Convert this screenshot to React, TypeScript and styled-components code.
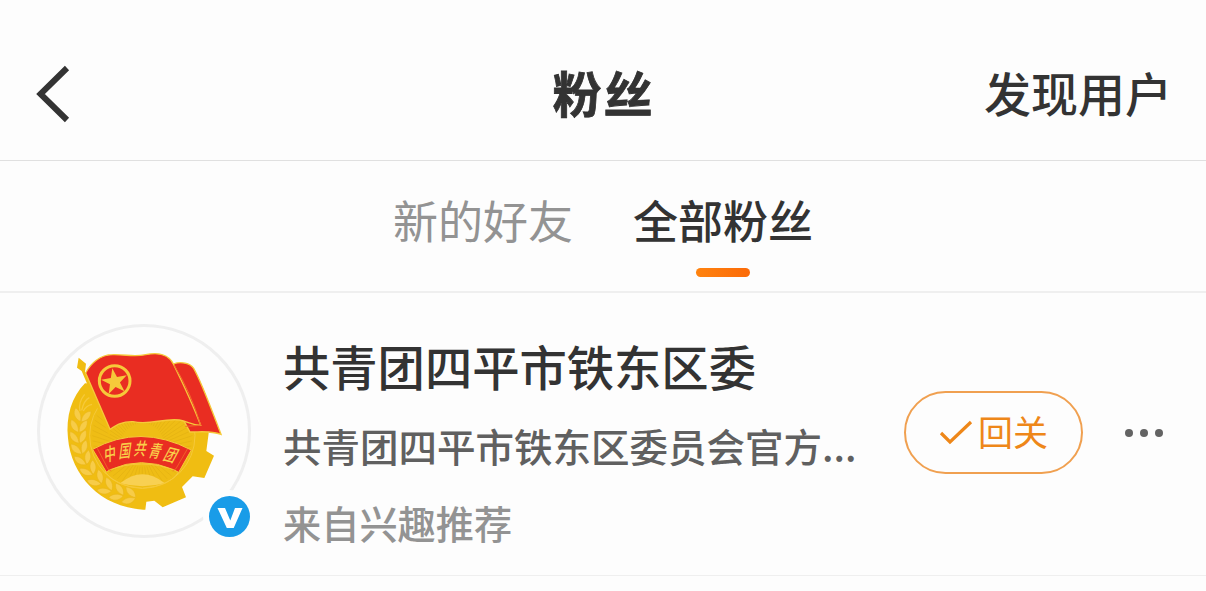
import { useState } from "react";
import styled, { createGlobalStyle } from "styled-components";

const TEXT_COLOR = "#333333";
const MUTED_COLOR = "#939393";
const ORANGE = "#ee8719";
const RED = "#e92d22";
const GOLD = "#f0bd12";
const LIGHT_GOLD = "#f6c93a";

const GlobalStyle = createGlobalStyle`
  * {
    box-sizing: border-box;
  }

  body {
    margin: 0;
    background: #fdfdfd;
    color: ${TEXT_COLOR};
    font-family: "Noto Sans CJK SC", sans-serif;
  }

  button {
    padding: 0;
    border: 0;
    background: none;
    color: inherit;
    font: inherit;
    cursor: pointer;
  }
`;

const Page = styled.div`
  width: 1206px;
  height: 591px;
  overflow: hidden;
`;

const Header = styled.header`
  height: 161px;
  padding: 28px 34px 0 35px;
  display: grid;
  grid-template-columns: 1fr auto 1fr;
  align-items: center;
  border-bottom: 1px solid #e0e0e0;
`;

const BackButton = styled.button`
  justify-self: start;
  display: flex;

  svg {
    width: 36px;
    height: 60px;
  }
`;

const Title = styled.h1`
  margin: 0 0 4px;
  font-size: 49px;
  line-height: 72px;
  font-weight: 700;
  letter-spacing: 2px;
  -webkit-text-stroke: 0.8px ${TEXT_COLOR};
`;

const DiscoverButton = styled.button`
  justify-self: end;
  margin-bottom: 5px;
  font-size: 47px;
  line-height: 68px;
  font-weight: 500;
`;

const Tabs = styled.nav`
  height: 132px;
  padding-top: 26px;
  display: flex;
  justify-content: center;
  gap: 60px;
  border-bottom: 2px solid #efefef;
`;

const Tab = styled.button<{ $active: boolean }>`
  display: flex;
  flex-direction: column;
  align-items: center;
  font-size: 45px;
  line-height: 66px;
  font-weight: ${(p) => (p.$active ? 500 : 400)};
  color: ${(p) => (p.$active ? TEXT_COLOR : MUTED_COLOR)};

  &::after {
    content: "";
    width: 54px;
    height: 9px;
    margin-top: 15px;
    border-radius: 5px;
    background: ${(p) =>
      p.$active ? "linear-gradient(90deg, #ff830f, #fb6a08)" : "transparent"};
  }
`;

const FanRow = styled.article`
  height: 283px;
  padding: 31px 43px 0 37px;
  display: flex;
  align-items: flex-start;
  border-bottom: 1px solid #efefef;
`;

const Avatar = styled.div`
  position: relative;
  flex: none;
  width: 214px;
  height: 214px;
  border: 3px solid #efefef;
  border-radius: 50%;

  > svg {
    display: block;
    width: 208px;
    height: 208px;
  }
`;

const Verified = styled.span`
  position: absolute;
  right: -8px;
  bottom: -8px;
  width: 53px;
  height: 53px;
  padding: 6px;
  border-radius: 50%;
  background: #fdfdfd;

  svg {
    display: block;
    width: 41px;
    height: 41px;
  }
`;

const Info = styled.div`
  flex: none;
  width: 653px;
  padding: 8px 0 0 32px;
  white-space: nowrap;
`;

const Name = styled.h2`
  margin: 0;
  font-size: 47.3px;
  line-height: 68px;
  font-weight: 500;
`;

const Description = styled.p`
  margin: 17px 0 0;
  font-size: 38.5px;
  line-height: 56px;
  font-weight: 500;
  color: #606060;
`;

const Source = styled(Description)`
  margin-top: 22px;
  font-size: 38.2px;
  color: ${MUTED_COLOR};
`;

const Actions = styled.div`
  flex: 1;
  padding-top: 67px;
  display: flex;
  align-items: center;
  justify-content: space-between;
`;

const FollowButton = styled.button`
  && {
    width: 179px;
    height: 83px;
    padding-bottom: 2px;
    display: flex;
    align-items: center;
    justify-content: center;
    gap: 5px;
    border: 2px solid #f0a050;
    border-radius: 42px;
    font-size: 35px;
    line-height: 50px;
    color: ${ORANGE};
  }

  svg {
    width: 34px;
    height: 26px;
    margin-top: 2px;
  }

  span {
    margin-top: -2px;
  }
`;

const MoreButton = styled.button`
  display: flex;
  gap: 7px;

  i {
    width: 8px;
    height: 8px;
    border-radius: 50%;
    background: #636363;
  }
`;

// leaf positions along the left side of the wheel: x, y, rotation
const LEAVES = [
  [154, 302, 8],
  [145, 334, -2],
  [144, 367, -10],
  [149, 400, -20],
  [160, 433, -28],
  [177, 465, -38],
  [200, 495, -48],
  [229, 519, -58],
  [263, 536, -68],
  [299, 546, -78],
];

const BANNER_TEXT: [string, number, number, number][] = [
  ["中", 240, 412, -14],
  ["国", 287, 403, -6],
  ["共", 334, 397, 0],
  ["青", 379, 403, 6],
  ["团", 426, 416, 14],
];

function starPoints(cx: number, cy: number, radius: number) {
  return Array.from({ length: 10 }, (_, i) => {
    const r = i % 2 ? radius * 0.39 : radius;
    const a = ((i * 36 - 100) * Math.PI) / 180;
    return `${cx + r * Math.cos(a)},${cy + r * Math.sin(a)}`;
  }).join(" ");
}

function Emblem() {
  return (
    <svg viewBox="30 36 624 624">
      <path
        d="M165 205 C125 245 107 305 114 370 C123 480 210 577 340 584 L346 584 L349 560 L373 557 L398 577 L468 547 L456 516 L488 484 L523 489 L552 422 L529 408 L536 355 L500 220Z"
        fill={GOLD}
      />
      <circle cx="337" cy="362" r="158" fill="#efbd15" stroke={LIGHT_GOLD} strokeWidth="3" />
      {Array.from({ length: 60 }, (_, i) => {
        const a = (i * 6 * Math.PI) / 180;
        return (
          <line
            key={i}
            x1={337 + 65 * Math.cos(a)}
            y1={390 + 65 * Math.sin(a)}
            x2={337 + 150 * Math.cos(a)}
            y2={362 + 150 * Math.sin(a)}
            stroke="#e3b112"
            strokeWidth="2"
          />
        );
      })}
      {LEAVES.map(([x, y, angle]) => (
        <g key={y} transform={`translate(${x} ${y}) rotate(${angle})`}>
          <path
            d="M0 18 C-21 11 -27 -7 -20 -21 C-5 -13 1 0 0 18Z M2 18 C2 -1 10 -14 27 -17 C29 1 20 14 2 18Z"
            fill="#f7cc48"
            stroke="#e8b41a"
            strokeWidth="1.5"
          />
        </g>
      ))}
      <path
        d="M150 288 Q144 262 164 238 M155 286 Q162 256 178 248 M160 288 Q168 272 186 268"
        fill="none"
        stroke={LIGHT_GOLD}
        strokeWidth="4"
      />
      <path d="M270 505 Q337 450 405 505 Q337 522 270 505Z" fill="#f8d052" />
      <path d="M225 470 Q335 424 447 470 Q424 512 337 520 Q250 512 225 470Z" fill="none" stroke={LIGHT_GOLD} strokeWidth="3" />

      <path
        d="M188 403 Q330 325 484 405 L446 472 L431 464 Q333 422 241 464 L229 471Z"
        fill={RED}
        stroke={LIGHT_GOLD}
        strokeWidth="3"
        strokeLinejoin="round"
      />
      <path d="M202 400 L234 462 L244 468 M472 402 L438 461 L428 468" fill="none" stroke="#f27b2b" strokeWidth="2" />
      {BANNER_TEXT.map(([char, x, y, angle]) => (
        <text
          key={char}
          transform={`translate(${x} ${y}) rotate(${angle}) skewX(-14) scale(.86 1.25)`}
          textAnchor="middle"
          dominantBaseline="central"
          fontFamily='"Noto Sans CJK SC", sans-serif'
          fontSize="42"
          fontWeight="500"
          fill="#f9cf4a"
        >
          {char}
        </text>
      ))}

      <path d="M146 128 L168 146 L165 170 L241 348 L239 366 L155 168 L141 158Z" fill={GOLD} />
      <path
        d="M430 147 C454 138 480 145 491 160 C515 202 545 285 573 358 C540 346 515 351 480 351 L463 320Z"
        fill={RED}
        stroke={LIGHT_GOLD}
        strokeWidth="4"
      />
      <path
        d="M167 174 C182 145 210 119 248 119 C290 118 310 127 347 119 C385 111 417 119 430 147 C463 214 491 275 512 331 C484 331 474 319 448 315 C397 309 360 332 309 320 C276 319 260 330 240 343Z"
        fill={RED}
        stroke={LIGHT_GOLD}
        strokeWidth="4"
      />
      <path d="M432 150 Q484 235 512 331 L466 334" fill="none" stroke="#f36b2b" strokeWidth="3" />
      <circle cx="254" cy="198" r="46" fill="none" stroke={LIGHT_GOLD} strokeWidth="9" />
      <polygon points={starPoints(254, 200, 41)} fill={LIGHT_GOLD} />
    </svg>
  );
}

const TABS = ["新的好友", "全部粉丝"];

export default function App() {
  const [activeTab, setActiveTab] = useState(TABS[1]);

  return (
    <Page>
      <GlobalStyle />
      <Header>
        <BackButton aria-label="返回">
          <svg viewBox="0 0 36 60" fill="none" stroke={TEXT_COLOR} strokeWidth="6">
            <path d="M32 4 L5.5 30 L32 56" />
          </svg>
        </BackButton>
        <Title>粉丝</Title>
        <DiscoverButton>发现用户</DiscoverButton>
      </Header>

      <Tabs>
        {TABS.map((tab) => (
          <Tab key={tab} $active={tab === activeTab} onClick={() => setActiveTab(tab)}>
            {tab}
          </Tab>
        ))}
      </Tabs>

      <FanRow>
        <Avatar>
          <Emblem />
          <Verified>
            <svg viewBox="0 0 41 41">
              <circle cx="20.5" cy="20.5" r="20.5" fill="#199ce8" />
              <path d="M8.5 12 H16 L21.3 24.5 L26 12 H33.5 L24.7 32 H17.8Z" fill="#fff" />
            </svg>
          </Verified>
        </Avatar>
        <Info>
          <Name>共青团四平市铁东区委</Name>
          <Description>共青团四平市铁东区委员会官方...</Description>
          <Source>来自兴趣推荐</Source>
        </Info>
        <Actions>
          <FollowButton>
            <svg viewBox="0 0 34 26" fill="none" stroke={ORANGE} strokeWidth="3.2">
              <path d="M2 13 L11 22 L32 2" />
            </svg>
            <span>回关</span>
          </FollowButton>
          <MoreButton aria-label="更多">
            <i />
            <i />
            <i />
          </MoreButton>
        </Actions>
      </FanRow>
    </Page>
  );
}
